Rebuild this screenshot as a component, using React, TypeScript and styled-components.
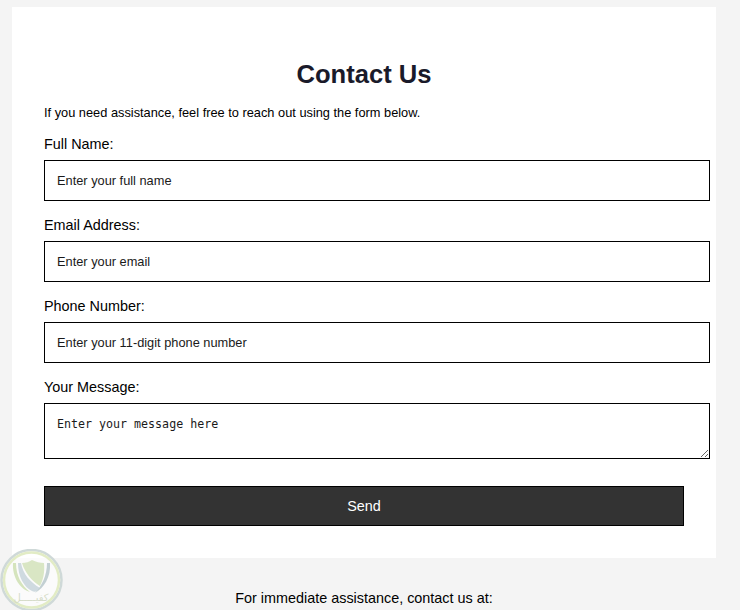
import styled, { createGlobalStyle } from "styled-components";

const GlobalStyle = createGlobalStyle`
    html, body {
        margin: 0;
        height: 610px;
        overflow: hidden;
        background: #f4f4f4;
    }
`;

const fields = [
    { label: "Full Name:", placeholder: "Enter your full name" },
    { label: "Email Address:", placeholder: "Enter your email" },
    { label: "Phone Number:", placeholder: "Enter your 11-digit phone number" },
];

const Watermark = () => (
    <WatermarkWrap viewBox="0 0 64 62" width="64" height="62" aria-hidden="true">
        <circle cx="31.5" cy="31" r="30" fill="#ffffff" fillOpacity="0.6" stroke="#cfd9d8" strokeWidth="2.5" />
        <circle cx="31.5" cy="31" r="27.5" fill="none" stroke="#e2ecc5" strokeWidth="2.5" />
        <path d="M22 14 C26 14 29 13 32 11 C36 13 40 14 44 14 C45 24 43 31 40 37 C32 32 25 24 22 14 Z" fill="#d9e6c4" />
        <path d="M18 14 L21 14 C23 25 30 33 40 39 C38 42 35 44 32 42 C24 38 18 28 18 14 Z" fill="#cfdae0" />
        <path d="M13 14 C12 28 20 40 30 43 C22 37 16 27 16 14 Z" fill="#d5e4bd" />
        <path d="M50 14 C51 28 44 39 35 44 C42 37 47 26 47 14 Z" fill="#c3d0d3" />
        <text x="31" y="52" textAnchor="middle" fontFamily="DejaVu Sans, sans-serif" fontSize="10" fill="#d5dbc8">
            كفيـــــل
        </text>
    </WatermarkWrap>
);

export default function App() {
    return (
        <Page>
            <GlobalStyle />
            <Card>
                <Title>Contact Us</Title>
                <Intro>If you need assistance, feel free to reach out using the form below.</Intro>
                <Form>
                    {fields.map((field) => (
                        <FieldGroup key={field.label}>
                            <Label>{field.label}</Label>
                            <TextInput type="text" placeholder={field.placeholder} />
                        </FieldGroup>
                    ))}
                    <FieldGroup>
                        <Label>Your Message:</Label>
                        <MessageArea placeholder="Enter your message here" />
                    </FieldGroup>
                    <SendButton type="button">Send</SendButton>
                </Form>
            </Card>
            <FooterNote>For immediate assistance, contact us at:</FooterNote>
            <Watermark />
        </Page>
    );
}

const Page = styled.main`
    width: 704px;
    margin-left: 12px;
    padding-top: 7px;
    font-family: "Liberation Sans", Arial, sans-serif;
    color: #000;
`;

const Card = styled.section`
    box-sizing: border-box;
    height: 551px;
    padding: 49px 32px 0;
    background: #fff;
`;

const Title = styled.h1`
    margin: 0 0 13px;
    font-size: 25.6px;
    line-height: 36px;
    font-weight: 700;
    text-align: center;
    color: #1a1a2a;
`;

const Intro = styled.p`
    margin: 0 0 15px;
    font-size: 12.8px;
    line-height: 16px;
`;

const Form = styled.form`
    display: flex;
    flex-direction: column;
`;

const FieldGroup = styled.div`
    display: flex;
    flex-direction: column;
    margin-bottom: 16px;
`;

const Label = styled.label`
    margin-bottom: 7px;
    font-size: 14.4px;
    line-height: 17px;
`;

const TextInput = styled.input`
    box-sizing: content-box;
    width: 100%;
    height: 15px;
    padding: 12px;
    border: 1px solid #000;
    border-radius: 0;
    outline: none;
    font-family: "Liberation Sans", Arial, sans-serif;
    font-size: 12.8px;
    background: #fff;

    &::placeholder {
        color: #1a1a1a;
        opacity: 1;
    }
`;

const MessageArea = styled.textarea`
    display: block;
    box-sizing: content-box;
    width: 100%;
    height: 30px;
    padding: 12px;
    border: 1px solid #000;
    border-radius: 0;
    outline: none;
    font-family: "DejaVu Sans Mono", monospace;
    font-size: 11.65px;
    line-height: 17px;
    background: #fff;
    resize: vertical;

    &::placeholder {
        color: #1a1a1a;
        opacity: 1;
    }
`;

const SendButton = styled.button`
    width: 100%;
    height: 40px;
    margin-top: 11px;
    border: 1px solid #000;
    border-radius: 0;
    background: #333;
    color: #fff;
    font-family: "Liberation Sans", Arial, sans-serif;
    font-size: 14.4px;
`;

const FooterNote = styled.p`
    margin: 32px 0 0;
    font-size: 14.4px;
    line-height: 17px;
    text-align: center;
`;

const WatermarkWrap = styled.svg`
    position: absolute;
    left: 0;
    top: 549px;
`;
